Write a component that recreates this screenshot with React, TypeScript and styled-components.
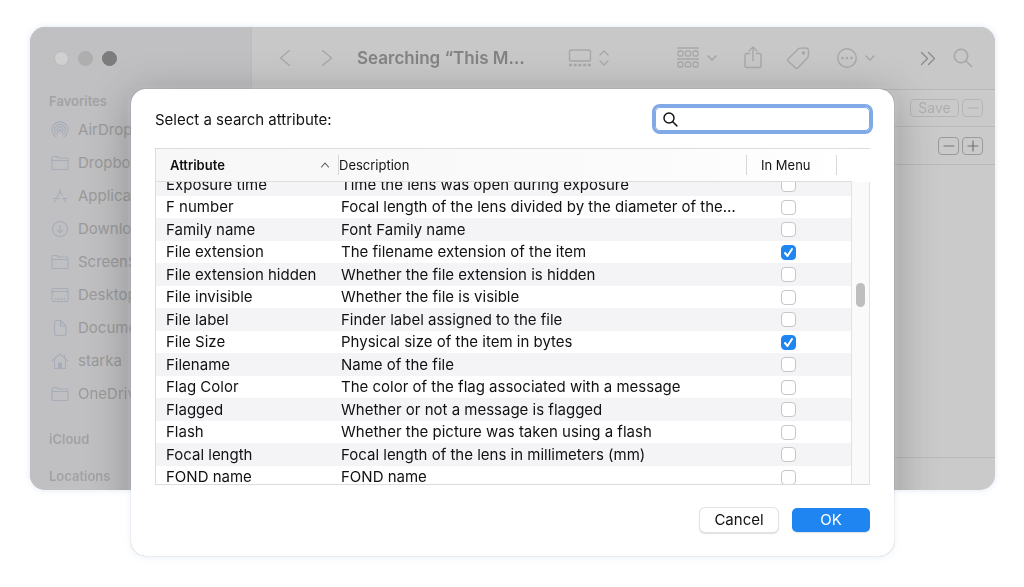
import React, { useLayoutEffect, useRef, useState } from "react";
import styled, { createGlobalStyle } from "styled-components";

const GlobalStyle = createGlobalStyle`
  * { box-sizing: border-box; }
  body {
    margin: 0;
    background: #fff;
    color: #111;
    font-family: Inter, "Liberation Sans", sans-serif;
    font-size: 15px;
  }
  button, input { font: inherit; margin: 0; padding: 0; }
  svg { display: block; fill: none; stroke: currentColor; stroke-linecap: round; stroke-linejoin: round; }
`;

const Stage = styled.main`
  display: grid;
  padding: 27px 29px 31px 30px;
`;

const FinderWindow = styled.section`
  grid-area: 1 / 1;
  align-self: start;
  position: relative;
  display: flex;
  border-radius: 15px;
  overflow: hidden;
  background: #cacaca;
  filter: drop-shadow(0 0 3px #dfe8f4);

  &::after {
    content: "";
    position: absolute;
    inset: 62px 101px -66px;
    border-radius: 14px;
    box-shadow: 0 0 1px #00000070, 0 8px 44px #00000048;
    pointer-events: none;
  }
`;

const Sidebar = styled.nav`
  width: 222px;
  flex: none;
  padding-bottom: 6px;
  background: #c0c0c2;
  border-right: 1px solid #bcbcbd;
`;

const TrafficLights = styled.div`
  display: flex;
  align-items: center;
  gap: 9px;
  height: 62px;
  padding-left: 24px;
`;

const Light = styled.span<{ $color: string; $edge: string }>`
  width: 15px;
  height: 15px;
  border-radius: 50%;
  background: ${(p) => p.$color};
  border: 1px solid ${(p) => p.$edge};
`;

const SectionTitle = styled.h2<{ $top: number }>`
  margin: ${(p) => p.$top}px 0 0 19px;
  font-size: 13px;
  line-height: 16px;
  font-weight: 600;
  color: #a2a2a4;
`;

const Places = styled.ul`
  list-style: none;
  margin: 4px 0 0;
  padding: 0;
`;

const Place = styled.a`
  display: flex;
  align-items: center;
  gap: 9px;
  height: 33px;
  padding-left: 21px;
  color: #9a9a9b;
  font-size: 15px;
  text-decoration: none;
  white-space: nowrap;
  svg { color: #a6adb9; flex: none; }
`;

const Content = styled.div`
  flex: 1;
  min-width: 0;
  display: flex;
  flex-direction: column;
`;

const Toolbar = styled.header`
  display: flex;
  align-items: center;
  height: 63px;
  padding: 0 22px 0 24px;
  background: #c8c8c8;
  border-bottom: 1px solid #b8b8b8;
`;

const WindowTitle = styled.h1`
  margin: 0 41px 0 21px;
  width: 170px;
  font-size: 17px;
  line-height: 24px;
  font-weight: 600;
  color: #838383;
  white-space: nowrap;
`;

const Tool = styled.button<{ $gap?: number; $push?: boolean; $strong?: boolean }>`
  flex: none;
  border: 0;
  background: none;
  color: ${(p) => (p.$strong ? "#8a8a8a" : "#a8a8a8")};
  margin-left: ${(p) => (p.$push ? "auto" : `${p.$gap ?? 0}px`)};
`;

const Criteria = styled.div<{ $height: number }>`
  display: flex;
  align-items: center;
  justify-content: flex-end;
  gap: 3px;
  height: ${(p) => p.$height}px;
  padding-right: 12px;
  border-bottom: 1px solid #b9b9b9;
`;

const SmallButton = styled.button<{ $wide?: boolean; $faint?: boolean }>`
  display: grid;
  place-items: center;
  width: ${(p) => (p.$wide ? 49 : 21)}px;
  height: 18px;
  border: 1px solid ${(p) => (p.$faint ? "#b5b5b5" : "#9a9a9a")};
  border-radius: 4px;
  background: none;
  color: ${(p) => (p.$faint ? "#aeaeae" : "#737373")};
  font-size: 14px;
  line-height: 16px;
`;

const StatusBar = styled.div`
  height: 33px;
  margin-top: auto;
  border-top: 1px solid #b9b9b9;
`;

const Dialog = styled.section`
  grid-area: 1 / 1;
  z-index: 1;
  margin: 62px 101px 0;
  padding: 18px 24px 24px;
  background: #fff;
  border-radius: 15px;
  box-shadow: 0 0 1px #00000050, 0 1px 6px #d5e0ee90;
`;

const DialogHeader = styled.header`
  display: flex;
  align-items: center;
  justify-content: space-between;
  height: 24px;
`;

const SearchField = styled.label`
  display: flex;
  align-items: center;
  gap: 6px;
  width: 215px;
  height: 24px;
  padding-left: 7px;
  border: 1px solid #7faae6;
  border-radius: 5px;
  box-shadow: 0 0 0 3px #7faae6;
`;

const SearchInput = styled.input`
  flex: 1;
  min-width: 0;
  border: 0;
  outline: 0;
  background: none;
`;

const ListFrame = styled.div`
  display: grid;
  grid-template-columns: 1fr;
  margin-top: 17px;
  border: 1px solid #dcdcdc;
  border-right: 0;
`;

const Table = styled.table`
  grid-area: 1 / 1;
  display: block;
`;

const Head = styled.thead`
  display: block;
  margin-right: 18px;
  background: linear-gradient(90deg, #f7f7f8, #fbfbfb 70%, #fff);
`;

const HeadRow = styled.tr`
  display: grid;
  grid-template-columns: 183px 1fr 90px 15px;
  align-items: center;
  height: 33px;
  border-bottom: 1px solid #dedede;
`;

const HeadCell = styled.th<{ $bold?: boolean; $pad?: number }>`
  display: flex;
  align-items: center;
  justify-content: space-between;
  height: 20px;
  padding: 0 8px 0 ${(p) => p.$pad ?? 0}px;
  border-right: 1px solid #d8d8d8;
  font-size: 13px;
  font-weight: ${(p) => (p.$bold ? 600 : 400)};
  white-space: nowrap;
  svg { color: #555; }
`;

const Body = styled.tbody`
  display: block;
  height: 302px;
  margin-right: 18px;
  overflow-y: auto;
  scrollbar-width: none;
`;

const Row = styled.tr`
  display: grid;
  grid-template-columns: 185px 1fr 106px;
  align-items: center;
  height: 22px;
  &:nth-child(odd) {
    height: 23px;
    background: #f4f4f6;
  }
`;

const Cell = styled.td<{ $pad?: number }>`
  padding: 0 0 0 ${(p) => p.$pad ?? 0}px;
  line-height: 22px;
  white-space: nowrap;
`;

const Tick = styled.label`
  display: grid;
  width: 15px;
  height: 15px;
  margin-left: 35px;
  > * { grid-area: 1 / 1; }
  svg { color: #fff; pointer-events: none; }
`;

const TickBox = styled.input`
  appearance: none;
  width: 15px;
  height: 15px;
  border: 1px solid #c6c6c6;
  border-radius: 4px;
  background: #fff;
  &:checked {
    background: #1f86f1;
    border-color: #1f86f1;
  }
`;

const ScrollTrack = styled.div`
  grid-area: 1 / 1;
  justify-self: end;
  width: 19px;
  margin-top: 33px;
  padding: 101px 4px 0;
  background: #fafafa;
  border: solid #e2e2e2;
  border-width: 0 1px;
`;

const ScrollThumb = styled.div`
  height: 24px;
  border-radius: 5px;
  background: #bebebe;
`;

const Actions = styled.footer`
  display: flex;
  justify-content: flex-end;
  gap: 14px;
  margin-top: 23px;
`;

const ActionButton = styled.button<{ $primary?: boolean }>`
  width: 78px;
  height: 24px;
  border: 0;
  border-radius: 5px;
  font-size: 15px;
  line-height: 24px;
  color: ${(p) => (p.$primary ? "#fff" : "#111")};
  background: ${(p) => (p.$primary ? "#1f86f1" : "#fff")};
  box-shadow: ${(p) => (p.$primary ? "0 1px 1px #00000020" : "0 0 0 1px #e2e2e2, 0 1px 1px 1px #00000020")};
`;

const attributes: [string, string, boolean][] = [
  ["Exposure time", "Time the lens was open during exposure", false],
  ["F number", "Focal length of the lens divided by the diameter of the…", false],
  ["Family name", "Font Family name", false],
  ["File extension", "The filename extension of the item", true],
  ["File extension hidden", "Whether the file extension is hidden", false],
  ["File invisible", "Whether the file is visible", false],
  ["File label", "Finder label assigned to the file", false],
  ["File Size", "Physical size of the item in bytes", true],
  ["Filename", "Name of the file", false],
  ["Flag Color", "The color of the flag associated with a message", false],
  ["Flagged", "Whether or not a message is flagged", false],
  ["Flash", "Whether the picture was taken using a flash", false],
  ["Focal length", "Focal length of the lens in millimeters (mm)", false],
  ["FOND name", "FOND name", false],
];

const folder = (
  <path d="M1 14V4a1.500 1.500 0 0 1 1.500-1.500h3.500l1.500 1.500h8a1.500 1.500 0 0 1 1.500 1.500V14a1.500 1.500 0 0 1-1.500 1.500h-13A1.500 1.500 0 0 1 1 14ZM1 6.500h16" />
);

const places: [string, React.ReactNode][] = [
  ["AirDrop", <><circle cx="9" cy="9" r="1" /><path d="M5 15.800a8 8 0 1 1 8 0M6.300 13.500a5.400 5.400 0 1 1 5.400 0M7.500 11.400a3 3 0 1 1 3 0" /></>],
  ["Dropbox", folder],
  ["Applications", <path d="M9.800 3 3.600 14.800M8.200 3l3 5.600M12.600 11.200l2 3.600M1.500 11.500h7M11.800 11.500h4.700" />],
  ["Downloads", <><circle cx="9" cy="9" r="7.500" /><path d="M9 5v7.500M6 9.800l3 3 3-3" /></>],
  ["ScreenShots", folder],
  ["Desktop", <><rect x="1" y="2.500" width="16" height="13" rx="1.500" /><path d="M1 5.500h16" /><path d="M4 13h10" strokeWidth="2" strokeDasharray="1.500 1.500" strokeLinecap="butt" /></>],
  ["Documents", <path d="M3.500 15V3A1.500 1.500 0 0 1 5 1.500h4.500L15 7v8a1.500 1.500 0 0 1-1.500 1.500H5A1.500 1.500 0 0 1 3.500 15ZM9.500 1.500V7H15" />],
  ["starka", <><path d="m1 9 8-7 8 7M3.500 7v9.500h11V7M13.500 5.800V3" /><path d="M7.500 16.500V11h3v5.500" fill="currentColor" /></>],
  ["OneDrive", folder],
];

function Chevron() {
  return (
    <svg width="12" height="12" viewBox="0 0 12 12" strokeWidth="1.6">
      <path d="m2 4 4 4 4-4" />
    </svg>
  );
}

function Magnifier({ size }: { size: number }) {
  return (
    <svg width={size} height={size} viewBox="0 0 20 20" strokeWidth={size > 18 ? 1.6 : 1.9}>
      <circle cx="8" cy="8" r="6.700" />
      <path d="m13 13 5.500 5.500" />
    </svg>
  );
}

function FinderToolbar() {
  return (
    <Toolbar>
      <Tool aria-label="Back">
        <svg width="18" height="20" viewBox="0 0 18 20" strokeWidth="1.4"><path d="m13.500 2.500-9 7.500 9 7.500" /></svg>
      </Tool>
      <Tool aria-label="Forward" $gap={24}>
        <svg width="18" height="20" viewBox="0 0 18 20" strokeWidth="1.4"><path d="m4.500 2.500 9 7.500-9 7.500" /></svg>
      </Tool>
      <WindowTitle>Searching “This M…</WindowTitle>
      <Tool aria-label="Gallery view">
        <svg width="24" height="20" viewBox="0 0 24 20" strokeWidth="1.4">
          <rect x="1.500" y="2" width="21" height="11" rx="1.500" />
          <path d="M1 17h22" strokeWidth="2.5" strokeDasharray="3 1.700" strokeLinecap="butt" />
        </svg>
      </Tool>
      <Tool aria-label="Choose view" $gap={6}>
        <svg width="12" height="18" viewBox="0 0 12 18" strokeWidth="1.4"><path d="m2 6 4-4 4 4M2 12l4 4 4-4" /></svg>
      </Tool>
      <Tool aria-label="Group items" $push>
        <svg width="24" height="24" viewBox="0 0 24 24" strokeWidth="1.3">
          <path d="M1.500 2h21M1.500 13h21" />
          {[5, 16].map((y) => [2, 9.5, 17].map((x) => (
            <rect key={`${x}-${y}`} x={x} y={y} width="5" height="5" rx="1.300" />
          )))}
        </svg>
      </Tool>
      <Tool aria-label="Group options" $gap={6}><Chevron /></Tool>
      <Tool aria-label="Share" $gap={25}>
        <svg width="20" height="24" viewBox="0 0 20 24" strokeWidth="1.4">
          <path d="M6.500 7.500H4a2 2 0 0 0-2 2v10a2 2 0 0 0 2 2h12a2 2 0 0 0 2-2v-10a2 2 0 0 0-2-2h-2.500M10 14.500V1M6 5l4-4 4 4" />
        </svg>
      </Tool>
      <Tool aria-label="Tags" $gap={23}>
        <svg width="24" height="24" viewBox="0 0 24 24" strokeWidth="1.4">
          <path d="M2 13 12.200 3a3 3 0 0 1 2-.900l5.600-.1a2.800 2.800 0 0 1 2.700 2.800l-.1 5a3 3 0 0 1-.9 2L11.800 22a1.500 1.500 0 0 1-2.100 0L2 15.100a1.500 1.500 0 0 1 0-2.100Z" />
          <circle cx="17.500" cy="7" r="1" fill="currentColor" />
        </svg>
      </Tool>
      <Tool aria-label="More actions" $gap={26}>
        <svg width="22" height="22" viewBox="0 0 22 22" strokeWidth="1.4">
          <circle cx="11" cy="11" r="9.300" />
          <path d="M6.500 11h.01M11 11h.01M15.500 11h.01" strokeWidth="2.700" />
        </svg>
      </Tool>
      <Tool aria-label="Action options" $gap={6}><Chevron /></Tool>
      <Tool aria-label="Show more tools" $gap={43} $strong>
        <svg width="18" height="16" viewBox="0 0 18 16" strokeWidth="1.300"><path d="m2.500 2.500 6 6-6 6M9.500 2.500l6 6-6 6" /></svg>
      </Tool>
      <Tool aria-label="Search" $gap={16}><Magnifier size={20} /></Tool>
    </Toolbar>
  );
}

function PlusMinus({ plus }: { plus?: boolean }) {
  return (
    <svg width="12" height="12" viewBox="0 0 12 12" strokeWidth="1.2">
      <path d={plus ? "M1 6h10M6 1v10" : "M1 6h10"} />
    </svg>
  );
}

function AttributeRow({ name, text, initial }: { name: string; text: string; initial: boolean }) {
  const [checked, setChecked] = useState(initial);
  return (
    <Row>
      <Cell $pad={10}>{name}</Cell>
      <Cell>{text}</Cell>
      <Cell>
        <Tick>
          <TickBox
            type="checkbox"
            aria-label={`Show ${name} in menu`}
            checked={checked}
            onChange={(e) => setChecked(e.target.checked)}
          />
          {checked && (
            <svg width="15" height="15" viewBox="0 0 15 15" strokeWidth="2"><path d="m4 8 2.500 3L11 4" /></svg>
          )}
        </Tick>
      </Cell>
    </Row>
  );
}

export default function App() {
  const body = useRef<HTMLTableSectionElement>(null);
  useLayoutEffect(() => {
    if (body.current) body.current.scrollTop = 9;
  }, []);

  return (
    <Stage>
      <GlobalStyle />
      <FinderWindow>
        <Sidebar>
          <TrafficLights>
            <Light $color="#d0d0d0" $edge="#bababa" />
            <Light $color="#aeaeae" $edge="#acacac" />
            <Light $color="#7c7c7c" $edge="#787878" />
          </TrafficLights>
          <SectionTitle $top={4}>Favorites</SectionTitle>
          <Places>
            {places.map(([name, icon]) => (
              <li key={name}>
                <Place href="#">
                  <svg width="18" height="18" viewBox="0 0 18 18" strokeWidth="1.1">{icon}</svg>
                  {name}
                </Place>
              </li>
            ))}
          </Places>
          <SectionTitle $top={21}>iCloud</SectionTitle>
          <SectionTitle $top={21}>Locations</SectionTitle>
        </Sidebar>
        <Content>
          <FinderToolbar />
          <Criteria $height={37}>
            <SmallButton $wide $faint>Save</SmallButton>
            <SmallButton $faint aria-label="Close search"><PlusMinus /></SmallButton>
          </Criteria>
          <Criteria $height={38}>
            <SmallButton aria-label="Remove criterion"><PlusMinus /></SmallButton>
            <SmallButton aria-label="Add criterion"><PlusMinus plus /></SmallButton>
          </Criteria>
          <StatusBar />
        </Content>
      </FinderWindow>

      <Dialog role="dialog" aria-label="Select a search attribute">
        <DialogHeader>
          <span>Select a search attribute:</span>
          <SearchField>
            <Magnifier size={15} />
            <SearchInput type="text" aria-label="Search attributes" />
          </SearchField>
        </DialogHeader>
        <ListFrame>
          <Table>
            <Head>
              <HeadRow>
                <HeadCell $bold $pad={14}>
                  Attribute
                  <svg width="10" height="8" viewBox="0 0 10 8" strokeWidth="1.1"><path d="m1.500 6 3.500-4 3.500 4" /></svg>
                </HeadCell>
                <HeadCell>Description</HeadCell>
                <HeadCell $pad={14}>In Menu</HeadCell>
              </HeadRow>
            </Head>
            <Body ref={body}>
              {attributes.map(([name, text, initial]) => (
                <AttributeRow key={name} name={name} text={text} initial={initial} />
              ))}
            </Body>
          </Table>
          <ScrollTrack>
            <ScrollThumb />
          </ScrollTrack>
        </ListFrame>
        <Actions>
          <ActionButton>Cancel</ActionButton>
          <ActionButton $primary>OK</ActionButton>
        </Actions>
      </Dialog>
    </Stage>
  );
}
